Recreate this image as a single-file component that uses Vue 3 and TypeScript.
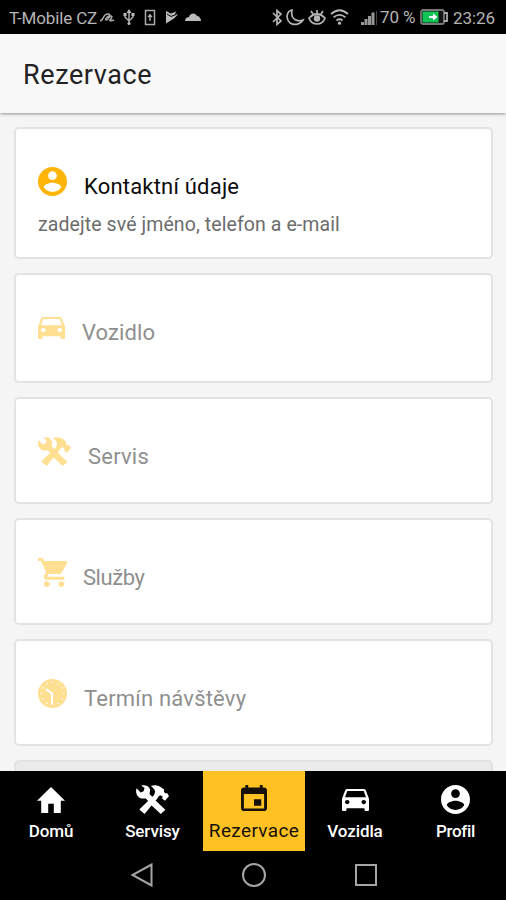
<script setup lang="ts">
interface Glyph {
  box: string
  path: string
}

const glyphs: Record<string, Glyph> = {
  person: {
    box: '2 2 20 20',
    path: 'M12 2C6.48 2 2 6.48 2 12s4.48 10 10 10 10-4.48 10-10S17.52 2 12 2zm0 3c1.66 0 3 1.34 3 3s-1.34 3-3 3-3-1.34-3-3 1.34-3 3-3zm0 14.2c-2.5 0-4.71-1.28-6-3.22.03-1.99 4-3.08 6-3.08 1.99 0 5.97 1.09 6 3.08-1.29 1.94-3.5 3.22-6 3.22z',
  },
  car: {
    box: '3 5 18 16',
    path: 'M18.92 6.01C18.72 5.42 18.16 5 17.5 5h-11c-.66 0-1.21.42-1.42 1.01L3 12v8c0 .55.45 1 1 1h1c.55 0 1-.45 1-1v-1h12v1c0 .55.45 1 1 1h1c.55 0 1-.45 1-1v-8l-2.08-5.99zM6.5 16c-.83 0-1.5-.67-1.5-1.5S5.67 13 6.5 13s1.5.67 1.5 1.5S7.33 16 6.5 16zm11 0c-.83 0-1.5-.67-1.5-1.5s.67-1.5 1.5-1.5 1.5.67 1.5 1.5-.67 1.5-1.5 1.5zM5 11l1.5-4.5h11L19 11H5z',
  },
  tools: {
    box: '0 0 100 88',
    path: 'M2 10L14 23L23 19L26 9L16 2C28 -1 39 3 43 14L41 27L54 41L44 56L29 40C19 43 7 39 3 30C0 24 -1 17 2 10ZM59 47L89 75L75 88L46 61ZM45 3C57 -2 69 1 78 8L85 14L85 21L90 26L94 24L100 33L88 48L79 41L81 36L75 31L69 33L67 38L26 88L10 74L38 47L55 30L58 20C56 12 52 8 45 3Z',
  },
  cart: {
    box: '1 2 20.5 20',
    path: 'M7 18c-1.1 0-1.99.9-1.99 2S5.9 22 7 22s2-.9 2-2-.9-2-2-2zM1 2v2h2l3.6 7.59-1.35 2.45c-.16.28-.25.61-.25.96 0 1.1.9 2 2 2h12v-2H7.42c-.14 0-.25-.11-.25-.25l.03-.12.9-1.63h7.45c.75 0 1.41-.41 1.75-1.03l3.58-6.49A1 1 0 0 0 20 4H5.21l-.94-2H1zm16 16c-1.1 0-1.99.9-1.99 2s.89 2 1.99 2 2-.9 2-2-.9-2-2-2z',
  },
  home: { box: '2 3 20 17', path: 'M10 20v-6h4v6h5v-8h3L12 3 2 12h3v8z' },
  event: {
    box: '3 1 18 20',
    path: 'M17 12h-5v5h5v-5zM16 1v2H8V1H6v2H5c-1.11 0-1.99.9-1.99 2L3 19c0 1.1.89 2 2 2h14c1.1 0 2-.9 2-2V5c0-1.1-.9-2-2-2h-1V1h-2zm3 18H5V8h14v11z',
  },
}

const steps = [
  { key: 'vehicle', icon: 'car', label: 'Vozidlo' },
  { key: 'service', icon: 'tools', label: 'Servis' },
  { key: 'offers', icon: 'cart', label: 'Služby' },
  { key: 'date', icon: 'clock', label: 'Termín návštěvy' },
]

const tabs = [
  { key: 't-home', icon: 'home', label: 'Domů', active: false },
  { key: 't-tools', icon: 'tools', label: 'Servisy', active: false },
  { key: 't-event', icon: 'event', label: 'Rezervace', active: true },
  { key: 't-car', icon: 'car', label: 'Vozidla', active: false },
  { key: 't-person', icon: 'person', label: 'Profil', active: false },
]

const ticks = Array.from({ length: 12 }, (_, i) => {
  const a = (i * Math.PI) / 6
  return { x: 15 + 11.6 * Math.sin(a), y: 15 - 11.6 * Math.cos(a) }
})
</script>

<template>
  <div class="screen">
    <header class="status">
      <span class="carrier">T-Mobile CZ</span>
      <svg class="left-icons" viewBox="100 0 104 34">
        <g fill="none" stroke="#aaa" stroke-width="1.5">
          <path d="M100 20c2 2 3-3 5-5 3-2 6-1 4 1-2 1-4 3-3 4 2 1 3-4 5-4s0 3-1 4 2 1 4 0" />
          <path d="M129 11v13M125 14v3l4 4 4-4v-3" />
          <rect x="145.5" y="10.5" width="9" height="14" />
          <path d="M150 14v7M148 17l2-2 2 2" />
        </g>
        <g fill="#bbb">
          <path d="M129 9l-2.500 4h5zM123.500 13h3v3h-3zM131.500 13h3v3h-3z" /><circle cx="129" cy="23.500" r="1.500" />
          <path d="M166 11l5 2.500 5-2-1 3 3 0-4 4-8 5z" />
          <path d="M185 21c0-3 2-4 4-4 1-4 6-5 8-1 2 0 4 2 4 5z" />
        </g>
        <path d="M167 14l4 2.500 5-2" fill="none" stroke="#000" />
      </svg>
      <svg class="right-icons" viewBox="270 0 110 34">
        <g fill="none" stroke="#b5b5b5" stroke-width="1.700">
          <path d="M273 13l8 8-4 3.500v-14l4 3.500-8 8" />
          <path d="M309 18q8-8 16 0c-1 3-3 6-8 6s-7-3-8-6zM317 10v3M311 11l2 3M323 11l-2 3" />
          <path d="M331 14q8.500-7.500 17 0M333.500 17.300q6-5 12 0M336.500 20.500q3-2.500 6 0" />
        </g>
        <circle cx="317" cy="18.500" r="3.200" fill="#b5b5b5" />
        <circle cx="339.500" cy="23.200" r="1.600" fill="#b5b5b5" />
        <path d="M292 10c-5 1-7 8-2 13 5 3 11 1 13-3-5 2-13 0-11-10z" fill="none" stroke="#b5b5b5" stroke-width="1.700" />
        <path d="M361 22h3v3h-3zM364.500 19h3v6h-3zM368 16h3v9h-3zM371.500 12.500h3V25h-3z" fill="#999" />
        <path d="M376 11h1v14h-1z" fill="#444" />
      </svg>
      <span class="percent">70 %</span>
      <svg class="battery" viewBox="0 0 29 16">
        <rect x="1" y="1" width="23" height="14" rx="2" fill="#151515" stroke="#777" stroke-width="1.800" />
        <rect x="2.500" y="2.500" width="16" height="11" fill="#12c455" />
        <path d="M9 7h4V4.500L17.500 8 13 11.500V9H9z" fill="#fff" />
        <path d="M24 4h3v8h-3" fill="none" stroke="#aaa" stroke-width="1.800" />
      </svg>
      <span class="time">23:26</span>
    </header>

    <div class="title-bar"><h1 class="title">Rezervace</h1></div>

    <main class="list">
      <section class="card contact">
        <div class="heading">
          <svg class="icon person" :viewBox="glyphs.person.box"><path :d="glyphs.person.path" /></svg>
          <span class="label">Kontaktní údaje</span>
        </div>
        <p class="hint">zadejte své jméno, telefon a e-mail</p>
      </section>
      <section v-for="step in steps" :key="step.key" class="card pending" :class="step.key">
        <div class="heading">
          <svg v-if="step.icon === 'clock'" class="icon clock" viewBox="0 0 30 30">
            <circle cx="15" cy="15" r="15" />
            <circle v-for="(t, i) in ticks" :key="i" class="tick" :cx="t.x" :cy="t.y" r="0.8" />
            <path class="hands" d="M8 10.500l6.500 4.500v10.500" />
          </svg>
          <svg v-else class="icon" :class="step.icon" :viewBox="glyphs[step.icon].box" preserveAspectRatio="none">
            <path :d="glyphs[step.icon].path" />
          </svg>
          <span class="label">{{ step.label }}</span>
        </div>
      </section>
      <section class="card next"></section>
    </main>

    <nav class="tabs">
      <a v-for="tab in tabs" :key="tab.key" class="tab" :class="[tab.key, { active: tab.active }]">
        <span class="slot">
          <svg class="tab-icon" :viewBox="glyphs[tab.icon].box" preserveAspectRatio="none">
            <path :d="glyphs[tab.icon].path" />
          </svg>
        </span>
        <span class="tab-label">{{ tab.label }}</span>
      </a>
    </nav>

    <footer class="system">
      <svg viewBox="0 0 24 24"><path d="M21.500 1.500v21L2.500 12z" /></svg>
      <svg viewBox="0 0 24 24"><circle cx="12" cy="12" r="11" /></svg>
      <svg viewBox="0 0 24 24"><rect x="2" y="2" width="20" height="20" /></svg>
    </footer>
  </div>
</template>

<style>
body { background: #000; }
</style>

<style scoped>
.screen { width: 506px; height: 900px; overflow: hidden; display: flex; flex-direction: column; background: #f5f5f5; font-family: Roboto, "Noto Sans", sans-serif; }
.screen svg { display: block; flex: none; }
.status { height: 34px; flex: none; display: flex; align-items: center; background: #000; color: #b5b5b5; font-size: 17px; line-height: 34px; white-space: nowrap; }
.carrier { width: 91px; padding: 2px 0 0 9px; letter-spacing: -0.15px; }
.left-icons { width: 104px; height: 34px; }
.right-icons { width: 110px; height: 34px; margin-left: 66px; }
.percent { width: 40px; letter-spacing: -0.1px; }
.battery { width: 29px; height: 16px; }
.time { margin-left: 4px; padding-top: 2px; letter-spacing: -0.1px; }
.title-bar { height: 79px; flex: none; box-sizing: border-box; display: flex; align-items: center; padding: 2px 0 0 23px; background: #f8f8f8; box-shadow: 0 1px 3px rgba(0, 0, 0, .4); position: relative; }
.title { margin: 0; font-size: 27px; font-weight: 400; color: #222; letter-spacing: .6px; }
.list { flex: 1; min-height: 0; overflow: hidden; display: flex; flex-direction: column; gap: 14px; padding: 14px 13px 0 14px; }
.card { box-sizing: border-box; flex: none; height: 107px; padding: 38px 22px 0; background: #fff; border: 2px solid #e3e3e3; border-radius: 5px; }
.contact { height: 132px; }
.vehicle { height: 110px; padding-top: 42px; }
.next { height: 60px; background: #ebebeb; }
.heading { height: 32px; display: flex; align-items: flex-start; }
.icon { fill: #ffb508; }
.pending .icon { fill: #ffdf91; }
.icon.person { width: 29px; height: 29px; }
.icon.car { width: 27px; height: 22px; }
.icon.tools { width: 33px; height: 29px; }
.icon.cart { width: 30px; height: 29px; }
.icon.clock { width: 29px; height: 29px; }
.clock .tick { fill: #fff; }
.clock .hands { fill: none; stroke: #fff; stroke-width: 2.2; }
.label { font-size: 22px; line-height: 28px; padding-top: 6px; margin-left: 17px; color: #0c0c0c; white-space: nowrap; letter-spacing: .2px; }
.pending .label { color: #8f8f8f; }
.vehicle .label { padding-top: 2px; letter-spacing: .1px; }
.offers .label { margin-left: 15px; letter-spacing: -.45px; }
.hint { margin: 14px 0 0; font-size: 19.500px; line-height: 24px; letter-spacing: .09px; color: #6c6c6c; white-space: nowrap; }
.tabs { height: 80px; flex: none; display: grid; grid-template-columns: 102px 101px 102px 100px 101px; background: #000; color: #fff; }
.tab { display: flex; flex-direction: column; align-items: center; fill: currentColor; }
.tab.active { background: #ffc222; color: #15110a; }
.slot { height: 49px; padding-top: 8px; box-sizing: border-box; display: flex; align-items: center; }
.tab-label { font-size: 17px; line-height: 22px; font-weight: 500; white-space: nowrap; letter-spacing: -.1px; }
.active .tab-label { font-size: 19px; font-weight: 400; letter-spacing: .35px; }
.t-person .tab-label { letter-spacing: -.3px; }
.tab-icon { width: 29px; height: 29px; }
.t-home .tab-icon { width: 28px; height: 26px; }
.t-tools .tab-icon { width: 33px; height: 29px; }
.t-event .slot { padding-top: 4px; }
.t-event .tab-icon { width: 26px; height: 26px; }
.t-car .tab-icon { width: 27px; height: 22px; }
.system { height: 49px; flex: none; box-sizing: border-box; display: flex; justify-content: center; align-items: center; gap: 88px; padding: 0 0 1px 2px; background: #000; }
.system svg { width: 24px; height: 24px; fill: none; stroke: #a5a5a5; stroke-width: 2; }
</style>
